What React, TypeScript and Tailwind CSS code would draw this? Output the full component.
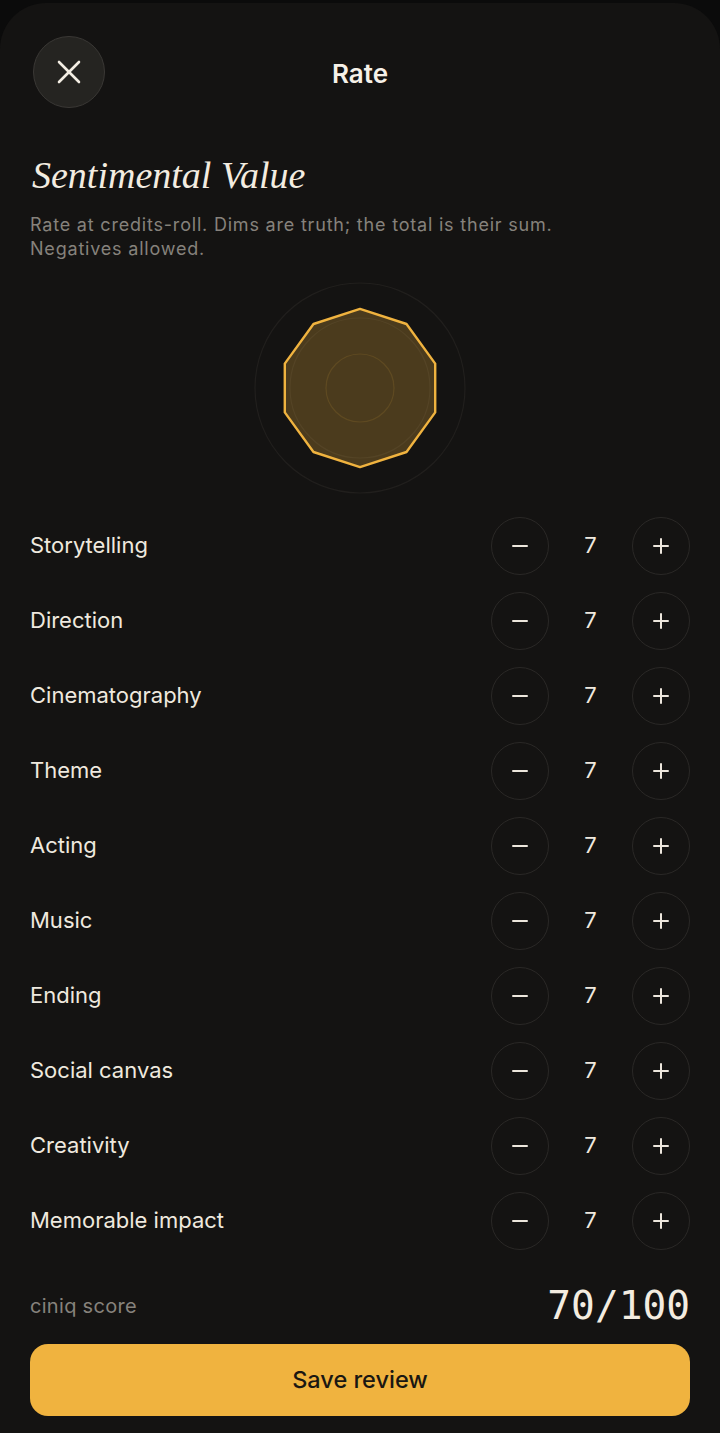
import { useState } from 'react'

// 評価項目
const DIMS = [
  'Storytelling',
  'Direction',
  'Cinematography',
  'Theme',
  'Acting',
  'Music',
  'Ending',
  'Social canvas',
  'Creativity',
  'Memorable impact',
]

const sans = "font-['Inter','Noto_Sans',sans-serif]"

function Radar({ values }: { values: number[] }) {
  const cx = 120
  const cy = 120
  const pts = values
    .map((v, i) => {
      const a = (Math.PI * 2 * i) / values.length - Math.PI / 2
      const r = (v / 10) * 113
      return `${(cx + r * Math.cos(a)).toFixed(1)},${(cy + r * Math.sin(a)).toFixed(1)}`
    })
    .join(' ')
  return (
    <svg width="240" height="240" viewBox="0 0 240 240">
      <circle cx={cx} cy={cy} r="105" fill="none" stroke="#211f1d" strokeWidth="1.2" />
      <circle cx={cx} cy={cy} r="70" fill="none" stroke="#211f1d" strokeWidth="1.2" />
      <polygon points={pts} fill="#f0b33f" fillOpacity="0.25" stroke="#f0b33f" strokeWidth="2.4" strokeLinejoin="round" />
      <circle cx={cx} cy={cy} r="34" fill="none" stroke="#f0b33f" strokeOpacity="0.12" strokeWidth="1.2" />
    </svg>
  )
}

function RoundButton({ kind, onClick }: { kind: 'minus' | 'plus'; onClick: () => void }) {
  return (
    <button
      onClick={onClick}
      className="w-[58px] h-[58px] rounded-full border border-[#2a2826] flex items-center justify-center"
    >
      <svg width="18" height="18" viewBox="0 0 18 18" stroke="#ece6dc" strokeWidth="2" strokeLinecap="round">
        <line x1="2" y1="9" x2="16" y2="9" />
        {kind === 'plus' && <line x1="9" y1="2" x2="9" y2="16" />}
      </svg>
    </button>
  )
}

export default function App() {
  const [scores, setScores] = useState<number[]>(DIMS.map(() => 7))
  const total = scores.reduce((a, b) => a + b, 0)

  const change = (i: number, d: number) => {
    setScores((prev) => prev.map((v, j) => (j === i ? v + d : v)))
  }

  return (
    <div className={`min-h-[1433px] bg-[#0b0b0b] pt-[3px] ${sans}`}>
      <div className="min-h-[1430px] bg-[#141312] rounded-t-[46px] pt-[33px] pb-[17px]">
        {/* ヘッダー */}
        <div className="flex items-center px-[33px]">
          <button className="w-[72px] h-[72px] rounded-full bg-[#252421] border border-[#3a3835] flex items-center justify-center">
            <svg width="26" height="26" viewBox="0 0 26 26" stroke="#f3ede3" strokeWidth="2.6" strokeLinecap="round">
              <line x1="3" y1="3" x2="23" y2="23" />
              <line x1="23" y1="3" x2="3" y2="23" />
            </svg>
          </button>
          <h1 className="flex-1 text-center text-[26px] font-semibold text-[#f6f1e8] pt-[3px]">Rate</h1>
          <div className="w-[72px]" />
        </div>

        <h2 className="mt-[45px] px-[32px] font-['Liberation_Serif',serif] italic text-[38px] leading-[44px] text-[#f3ece0]">
          Sentimental Value
        </h2>
        <p className="mt-[16px] px-[30px] text-[18px] leading-[24px] tracking-[0.8px] text-[#86827c]">
          Rate at credits-roll. Dims are truth; the total is their sum.
          <br />
          Negatives allowed.
        </p>

        <div className="mt-[7px] flex justify-center">
          <Radar values={scores} />
        </div>

        <div className="flex flex-col">
          {DIMS.map((name, i) => (
            <div key={name} className="h-[75px] flex items-center pl-[30px] pr-[30px]">
              <span className="flex-1 text-[22px] text-[#efe9df]">{name}</span>
              <RoundButton kind="minus" onClick={() => change(i, -1)} />
              <span className="w-[83px] text-center text-[22px] text-[#efe9df]">{scores[i]}</span>
              <RoundButton kind="plus" onClick={() => change(i, 1)} />
            </div>
          ))}
        </div>

        <div className="mt-[22px] h-[52px] flex items-center justify-between px-[30px]">
          <span className="text-[20px] tracking-[0.3px] text-[#86827c]">ciniq score</span>
          <span className="font-['DejaVu_Sans_Mono',monospace] text-[39.5px] text-[#f3ece0]">
            {total}/100
          </span>
        </div>

        <div className="mt-[12px] px-[30px]">
          <button className="w-full h-[72px] rounded-[18px] bg-[#f0b33f] text-[23.5px] font-medium text-[#1a1712]">
            Save review
          </button>
        </div>
      </div>
    </div>
  )
}
